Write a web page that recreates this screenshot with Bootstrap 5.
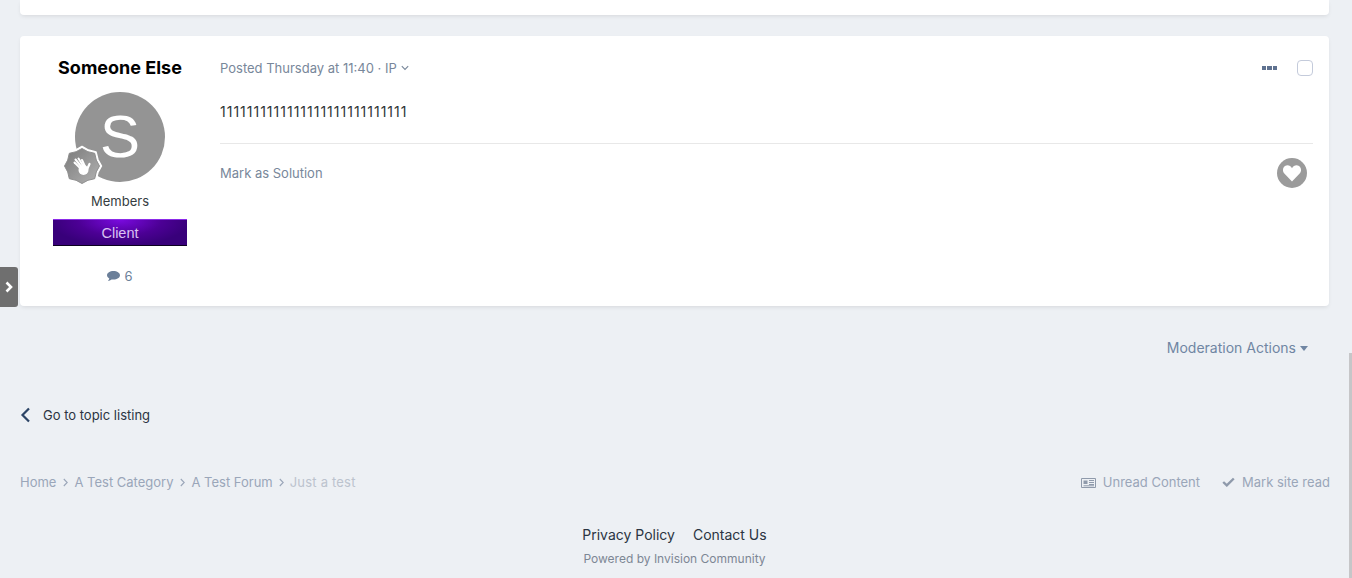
<!DOCTYPE html>
<html lang="en">
<head>
    <meta charset="UTF-8">
    <meta name="viewport" content="width=device-width, initial-scale=1.0">
    <title>Just a test</title>
    <link href="https://cdn.jsdelivr.net/npm/bootstrap@5.3.3/dist/css/bootstrap.min.css" rel="stylesheet">
    <style>
        html, body {
            height: 100%;
            overflow: hidden;
        }
        body {
            background-color: #edf0f4;
            font-family: Inter, "Liberation Sans", sans-serif;
            font-size: 13px;
            color: #353c41;
        }
        #page-wrap {
            padding: 0 23px 0 20px;
        }
        .post-box {
            background-color: #fff;
            border-radius: 4px;
            box-shadow: 0 2px 4px -1px rgba(0, 0, 0, .1);
        }
        .post-prev {
            height: 15px;
            border-radius: 0 0 4px 4px;
        }
        .post-main {
            height: 270px;
            margin-top: 21px;
        }
        .author-col {
            width: 200px;
            flex-shrink: 0;
            padding-top: 19px;
        }
        .author-name {
            font-size: 18px;
            font-weight: 700;
            line-height: 25px;
            color: #000;
        }
        .avatar-wrap {
            width: 90px;
            height: 90px;
            margin: 12px auto 0;
            position: relative;
        }
        .avatar-circle {
            width: 90px;
            height: 90px;
            border-radius: 50%;
            background-color: #949494;
            color: #fff;
            font-family: "Liberation Sans", sans-serif;
            font-size: 60px;
            line-height: 90px;
            text-align: center;
        }
        .rank-badge {
            position: absolute;
            left: -12px;
            bottom: -3px;
            width: 38px;
            height: 38px;
            overflow: visible;
        }
        .group-name {
            margin-top: 10px;
            line-height: 18px;
        }
        .group-banner {
            width: 134px;
            height: 27px;
            margin: 9px auto 0;
            background: radial-gradient(ellipse 70px 26px at 50% 0, #7a0adf 0, #4c0095 60%, #38007a 100%);
            border-top: 1px solid #8b2be8;
            border-bottom: 1px solid #0c0020;
            color: #d9c2f2;
            font-family: "Liberation Sans", sans-serif;
            font-size: 14.500px;
            line-height: 26px;
        }
        .post-count {
            margin-top: 21px;
            line-height: 18px;
            color: #6b7f99;
        }
        .post-col {
            padding: 0 16px 0 0;
        }
        .post-meta {
            height: 18px;
            margin-top: 23px;
            color: #78879a;
            line-height: 18px;
        }
        .more-dots {
            display: flex;
            gap: 1px;
            margin-right: 20px;
        }
        .more-dots span {
            width: 4.500px;
            height: 4.500px;
            background-color: #5f7290;
        }
        .select-box {
            width: 16px;
            height: 16px;
            border: 1px solid #c4cbdb;
            border-radius: 4px;
        }
        .post-text {
            margin-top: 24px;
            height: 42px;
            font-size: 14px;
            line-height: 21px;
            letter-spacing: 1px;
            color: #2f3336;
        }
        .post-rule {
            height: 1px;
            background-color: #e8e8e8;
        }
        .post-actions {
            margin-top: 14px;
            height: 30px;
            color: #78879a;
        }
        .solution-link {
            padding-top: 1px;
        }
        .heart-btn {
            width: 30px;
            height: 30px;
            border-radius: 50%;
            background-color: #9b9b9b;
            display: flex;
            align-items: center;
            justify-content: center;
            margin-right: 6px;
        }
        .side-tab {
            position: absolute;
            left: 0;
            top: 267px;
            width: 18px;
            height: 40px;
            background-color: #6f6f6f;
            border-radius: 0 3px 3px 0;
            display: flex;
            align-items: center;
            justify-content: flex-start;
            padding-left: 4px;
        }
        .mod-row {
            margin-top: 33px;
            height: 18px;
            padding-right: 21px;
            line-height: 18px;
            font-size: 14px;
            color: #7086a3;
        }
        .mod-caret {
            width: 0;
            height: 0;
            margin-left: 4px;
            border-left: 4.500px solid transparent;
            border-right: 4.500px solid transparent;
            border-top: 5px solid #7086a3;
        }
        .back-row {
            margin-top: 49px;
            height: 18px;
            line-height: 18px;
            color: #2b3442;
        }
        .crumb-row {
            margin-top: 49px;
            height: 18px;
            line-height: 18px;
            color: #9aa6b9;
            margin-right: -1px;
        }
        .crumb-sep {
            margin: 0 6.500px;
        }
        .crumb-now {
            color: #bcc3ce;
            margin-left: -1px;
            letter-spacing: .2px;
        }
        .unread-icon {
            margin-left: auto;
            margin-right: 7px;
        }
        .read-icon {
            margin-left: 22px;
            margin-right: 7px;
        }
        .footer-links {
            margin-top: 35px;
            gap: 18px;
            font-size: 14px;
            line-height: 18px;
            color: #2b3442;
        }
        .footer-power {
            margin-top: 6px;
            font-size: 12px;
            line-height: 18px;
            color: #7d8794;
        }
        .scroll-thumb {
            position: absolute;
            right: 0;
            top: 353px;
            width: 3px;
            height: 225px;
            background-color: #c6c6c8;
        }
    </style>
</head>
<body>
    <div class="side-tab">
        <svg width="10" height="12" viewBox="0 0 10 12"><path d="M2.500 1.500 7 6 2.500 10.500" fill="none" stroke="#fff" stroke-width="2.600"/></svg>
    </div>
    <div class="scroll-thumb"></div>

    <div id="page-wrap">
        <div class="post-box post-prev"></div>

        <div class="post-box post-main d-flex">
            <div class="author-col text-center">
                <div class="author-name">Someone Else</div>
                <div class="avatar-wrap">
                    <div class="avatar-circle">S</div>
                    <svg class="rank-badge" viewBox="0 0 38 38">
                        <defs>
                            <linearGradient id="badgeFill" x1="0" y1="0" x2="1" y2="1">
                                <stop offset="0" stop-color="#7a7a7a"/>
                                <stop offset="1" stop-color="#b2b2b2"/>
                            </linearGradient>
                        </defs>
                        <path d="M19 -.5 25.500 3.100 33 4.900 34.900 12.500 38.500 19 34.900 25.500 33 33 25.500 34.900 19 38.500 12.500 34.900 4.900 33 3.100 25.500 -.5 19 3.100 12.500 4.900 4.900 12.500 3.100Z" fill="#fff" stroke="#fff" stroke-width="1.500" stroke-linejoin="round"/>
                        <path d="M19 1.500 24.900 4.700 31.700 6.300 33.300 13.100 36.500 19 33.300 24.900 31.700 31.700 24.900 33.300 19 36.500 13.100 33.300 6.300 31.700 4.700 24.900 1.500 19 4.700 13.100 6.300 6.300 13.100 4.700Z" fill="url(#badgeFill)" stroke="#8f8f8f" stroke-width="1" stroke-linejoin="round"/>
                        <g stroke="#fff" stroke-linecap="round" fill="none">
                            <path d="M18 22 11.500 15.500" stroke-width="2"/>
                            <path d="M19 20.500 12.500 12.500" stroke-width="2"/>
                            <path d="M20.500 19.500 15.500 11.500" stroke-width="2"/>
                            <path d="M22 19.500 19 13" stroke-width="2"/>
                            <path d="M24 22.500 26.500 17" stroke-width="2.200"/>
                        </g>
                        <circle cx="20.500" cy="23" r="5" fill="#fff"/>
                    </svg>
                </div>
                <div class="group-name">Members</div>
                <div class="group-banner">Client</div>
                <div class="post-count d-flex align-items-center justify-content-center gap-1">
                    <svg width="13" height="12" viewBox="0 0 13 12"><path d="M6.500 1C10 1 13 2.900 13 5.300 13 7.700 10 9.600 6.500 9.600 5.800 9.600 5.200 9.500 4.600 9.400 3.600 10.300 2.300 10.800 .9 11 1.600 10.200 2.100 9.300 2.300 8.500 .9 7.700 0 6.600 0 5.300 0 2.900 2.900 1 6.500 1Z" fill="#6b7f99"/></svg>
                    <span>6</span>
                </div>
            </div>

            <div class="post-col flex-grow-1">
                <div class="post-meta d-flex align-items-center">
                    <span>Posted Thursday at 11:40 · IP</span>
                    <svg class="ms-1" width="8" height="6" viewBox="0 0 8 6"><path d="M.8 1.200 4 4.400 7.200 1.200" fill="none" stroke="#78879a" stroke-width="1.100"/></svg>
                    <div class="more-dots ms-auto"><span></span><span></span><span></span></div>
                    <div class="select-box"></div>
                </div>
                <div class="post-text">1111111111111111111111111111</div>
                <div class="post-rule"></div>
                <div class="post-actions d-flex align-items-center justify-content-between">
                    <span class="solution-link">Mark as Solution</span>
                    <div class="heart-btn">
                        <svg width="20" height="18" viewBox="0 0 22 20"><path d="M11 19.500 2.500 10.500C-.5 7.500 1 1.500 5.800 1.500 8 1.500 10 2.700 11 4.700 12 2.700 14 1.500 16.200 1.500 21 1.500 22.500 7.500 19.500 10.500Z" fill="#fff"/></svg>
                    </div>
                </div>
            </div>
        </div>

        <div class="mod-row d-flex align-items-center justify-content-end">
            <span>Moderation Actions</span><span class="mod-caret"></span>
        </div>

        <div class="back-row d-flex align-items-center">
            <svg width="11" height="16" viewBox="0 0 11 16"><path d="M9 1.500 2.500 8 9 14.500" fill="none" stroke="#2c4466" stroke-width="2.200"/></svg>
            <span class="ms-2 ps-1">Go to topic listing</span>
        </div>

        <div class="crumb-row d-flex align-items-center">
            <span>Home</span>
            <svg class="crumb-sep" width="5" height="9" viewBox="0 0 5 9"><path d="M.8 1 4.200 4.500.8 8" fill="none" stroke="#9aa6b9" stroke-width="1.100"/></svg>
            <span>A Test Category</span>
            <svg class="crumb-sep" width="5" height="9" viewBox="0 0 5 9"><path d="M.8 1 4.200 4.500.8 8" fill="none" stroke="#9aa6b9" stroke-width="1.100"/></svg>
            <span>A Test Forum</span>
            <svg class="crumb-sep" width="5" height="9" viewBox="0 0 5 9"><path d="M.8 1 4.200 4.500.8 8" fill="none" stroke="#9aa6b9" stroke-width="1.100"/></svg>
            <span class="crumb-now">Just a test</span>
            <svg class="unread-icon" width="15" height="11" viewBox="0 0 15 11"><path d="M.5 1.500H14.500V10.500H.5Z" fill="none" stroke="#8f9aab"/><path d="M2.500 3.500H6.500V7H2.500Z" fill="#8f9aab"/><path d="M8 3.500H13M8 5.500H13M8 7.500H13M2.500 8.800H13" fill="none" stroke="#8f9aab"/></svg>
            <span>Unread Content</span>
            <svg class="read-icon" width="13" height="10" viewBox="0 0 13 10"><path d="M1.200 5 4.800 8.400 11.800 1.500" fill="none" stroke="#8f9aab" stroke-width="2.400"/></svg>
            <span>Mark site read</span>
        </div>

        <div class="footer-links d-flex justify-content-center">
            <span>Privacy Policy</span>
            <span>Contact Us</span>
        </div>
        <div class="footer-power text-center">Powered by Invision Community</div>
    </div>
</body>
</html>
